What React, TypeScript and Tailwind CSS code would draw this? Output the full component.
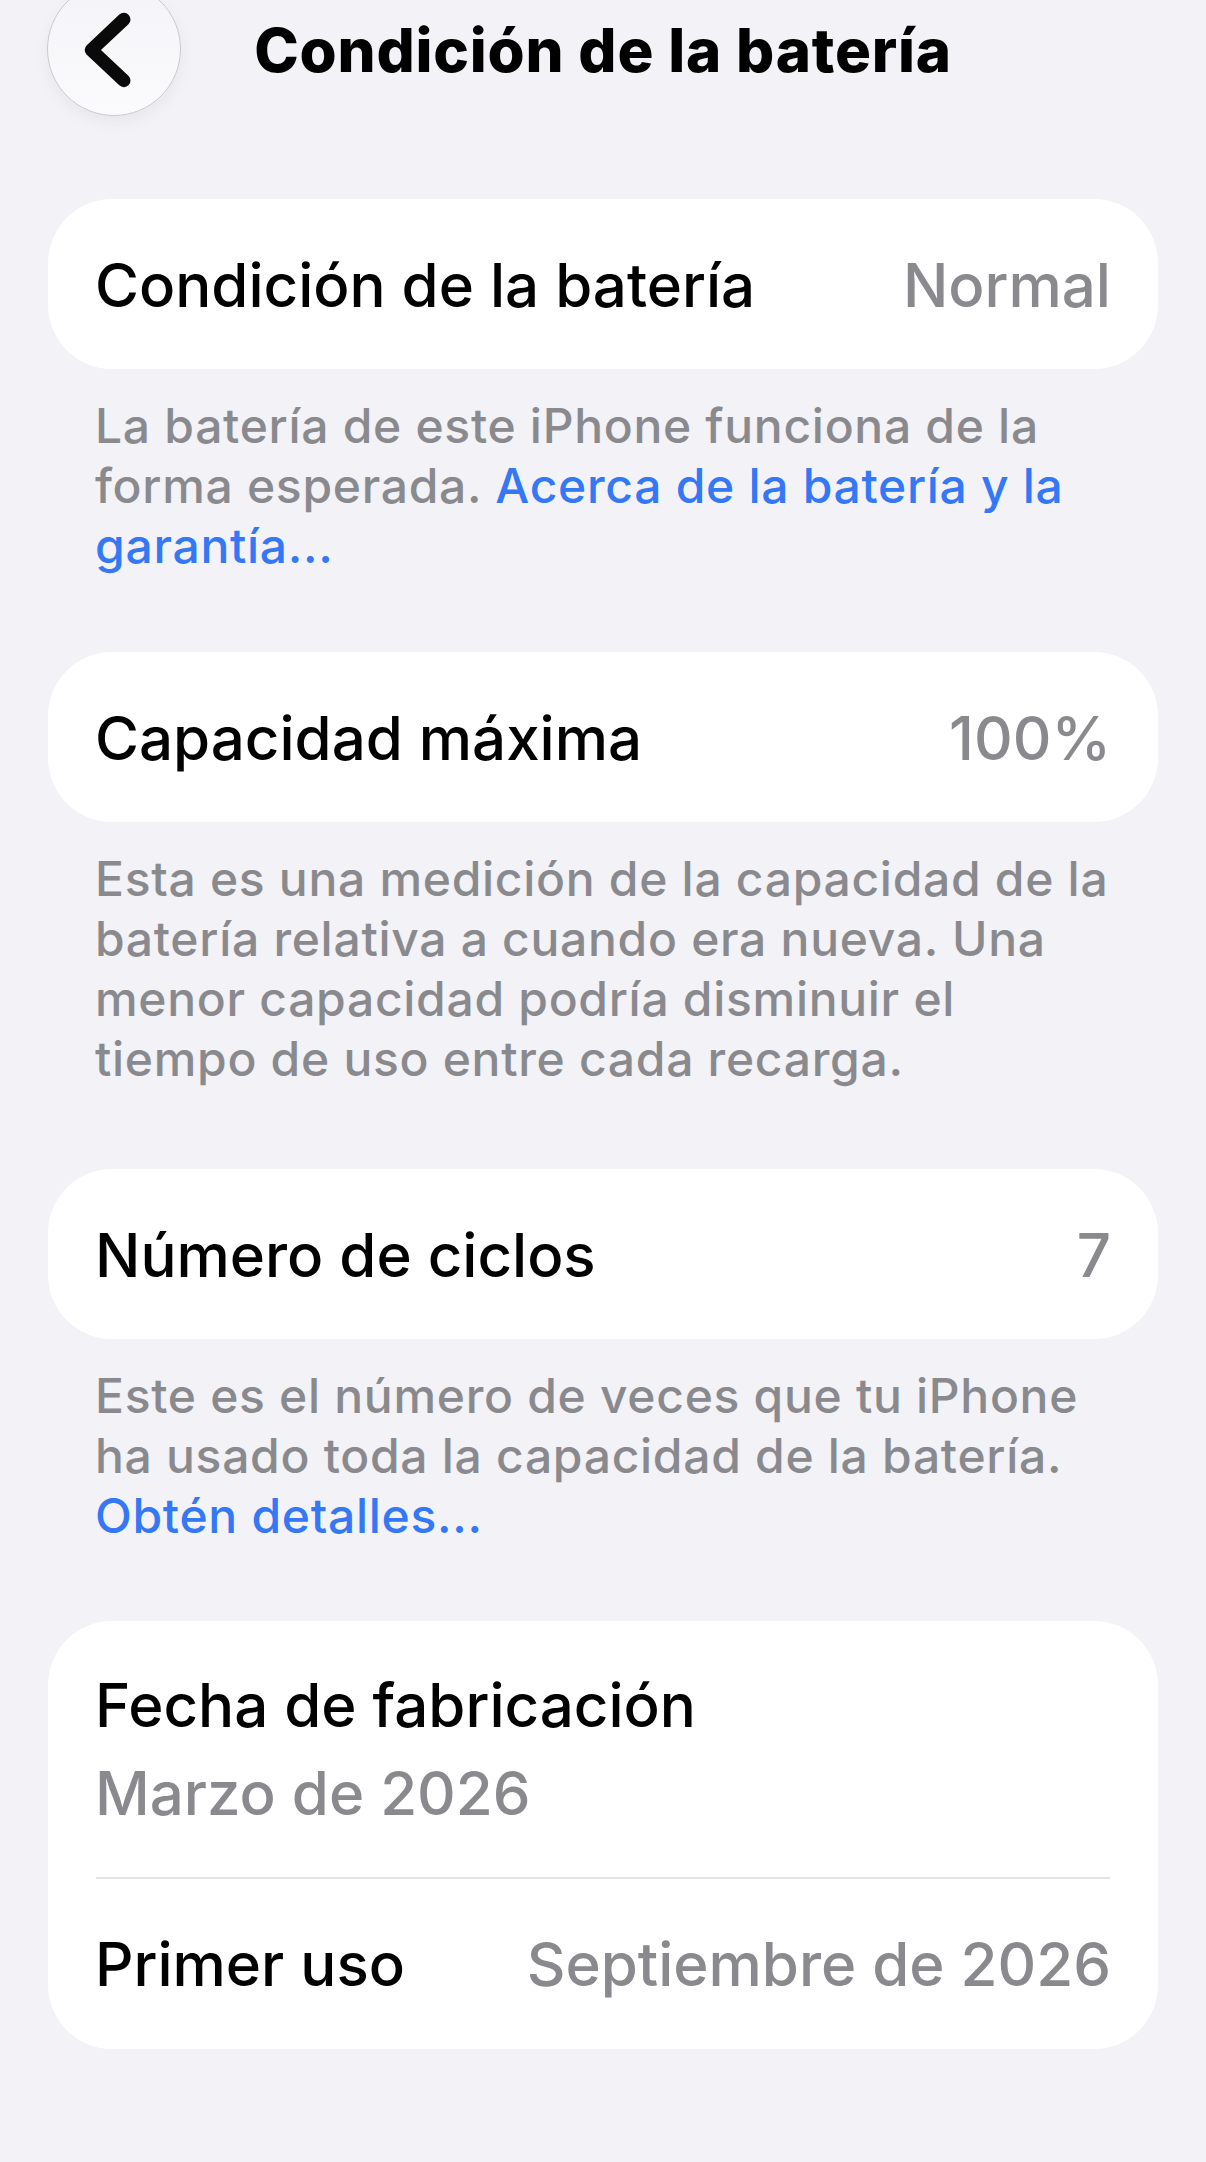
import React from "react";

const font = { fontFamily: 'Inter, "Noto Sans", "Liberation Sans", sans-serif' };

function Card({ label, value }: { label: string; value: string }) {
  return (
    <div className="mx-[48px] h-[170px] rounded-[64px] bg-white px-[47px] flex items-center justify-between pt-[2px]">
      <span className="text-[60px] leading-[72px] font-medium text-black whitespace-nowrap">{label}</span>
      <span className="text-[60px] leading-[72px] font-medium text-[#8a8a8e] whitespace-nowrap">{value}</span>
    </div>
  );
}

function Desc({ children, mb }: { children: React.ReactNode; mb: string }) {
  return (
    <div className={`mt-[27px] px-[95px] text-[48px] leading-[60px] font-medium tracking-[0.7px] text-[#8a8a8e] whitespace-nowrap ${mb}`}>
      {children}
    </div>
  );
}

export default function App() {
  return (
    <div className="min-h-[2162px] w-full bg-[#f2f2f7] overflow-hidden" style={font}>
      {/* Header */}
      <div className="grid grid-cols-[1fr_auto_1fr] items-start">
        <div className="pl-[47px]">
          <div className="-mt-[18px] h-[134px] w-[134px] rounded-full border border-[#c9c9ce] bg-gradient-to-b from-[#f4f4f8] to-[#fbfbfd] shadow-[0_6px_16px_rgba(0,0,0,0.05)] flex items-center justify-center">
            <svg width="134" height="134" viewBox="0 0 134 134" fill="none">
              <path d="M77 37 L44 68 L77 99" stroke="#0a0a0a" strokeWidth="13.5" strokeLinecap="round" strokeLinejoin="round" />
            </svg>
          </div>
        </div>
        <h1 className="mt-[14px] text-[60px] leading-[72px] font-extrabold tracking-[0.8px] text-black whitespace-nowrap">
          Condición de la batería
        </h1>
        <div />
      </div>

      <div className="mt-[83px]">
        <Card label="Condición de la batería" value="Normal" />
        <Desc mb="mb-[76px]">
          La batería de este iPhone funciona de la
          <br />
          forma esperada. <span className="text-[#3478f6]">Acerca de la batería y la</span>
          <br />
          <span className="text-[#3478f6]">garantía...</span>
        </Desc>

        <Card label="Capacidad máxima" value="100%" />
        <Desc mb="mb-[80px]">
          Esta es una medición de la capacidad de la
          <br />
          batería relativa a cuando era nueva. Una
          <br />
          menor capacidad podría disminuir el
          <br />
          tiempo de uso entre cada recarga.
        </Desc>

        <Card label="Número de ciclos" value="7" />
        <Desc mb="mb-[75px]">
          Este es el número de veces que tu iPhone
          <br />
          ha usado toda la capacidad de la batería.
          <br />
          <span className="text-[#3478f6]">Obtén detalles...</span>
        </Desc>

        <div className="mx-[48px] rounded-[64px] bg-white">
          <div className="px-[47px] pt-[48px] pb-[48px]">
            <div className="text-[60px] leading-[72px] font-medium text-black whitespace-nowrap">Fecha de fabricación</div>
            <div className="mt-[16px] text-[60px] leading-[72px] font-medium text-[#8a8a8e] whitespace-nowrap">Marzo de 2026</div>
          </div>
          <div className="mx-[48px] h-[2px] bg-[#e3e3e7]" />
          <div className="h-[170px] px-[47px] flex items-center justify-between">
            <span className="text-[60px] leading-[72px] font-medium text-black whitespace-nowrap">Primer uso</span>
            <span className="text-[60px] leading-[72px] font-medium text-[#8a8a8e] whitespace-nowrap">Septiembre de 2026</span>
          </div>
        </div>
      </div>
    </div>
  );
}
